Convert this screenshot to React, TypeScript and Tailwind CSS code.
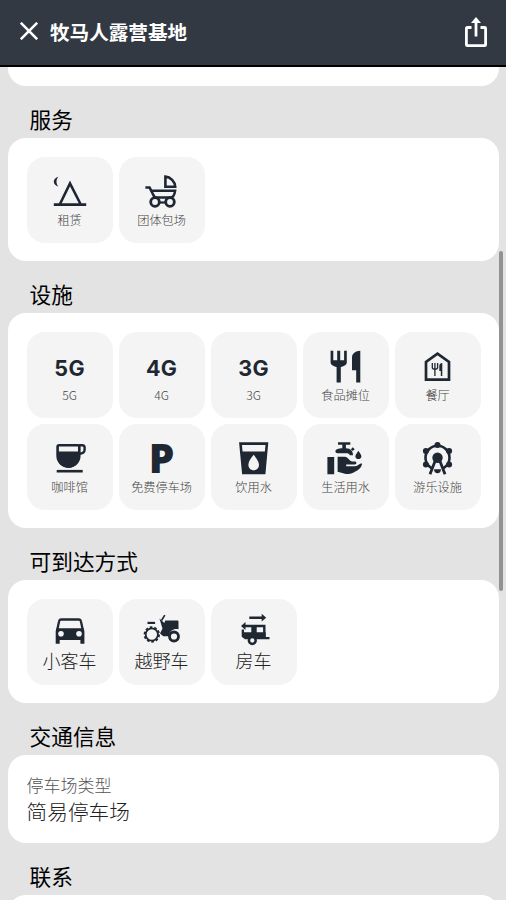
import type { ReactNode } from 'react';
import clsx from 'clsx';

/* ==========================================================
   icons (all drawn on a 36x36 grid)
   ========================================================== */
const Icon = ({ children }: { children: ReactNode }) => (
  <svg viewBox="0 0 36 36" className="h-9 w-9 overflow-visible" fill="none" stroke="currentColor" strokeWidth="2.6">
    {children}
  </svg>
);

const Letters = ({ text }: { text: string }) => (
  <span className="flex h-9 items-center justify-center pt-[7px] font-[Inter] text-[21.5px] leading-none font-bold tracking-[0.3px]">
    {text}
  </span>
);

const TentIcon = () => (
  <Icon>
    <path d="M6.4 3.8C.4 5.3.2 12 6.4 13.6 3.9 11 3.9 6.5 6.4 3.8Z" fill="currentColor" stroke="none" />
    <path d="M8 31 18 10.5 28.5 31" />
    <path d="M1.8 31.6h32.4" />
  </Icon>
);

const StrollerIcon = () => (
  <Icon>
    <path d="M1.4 14.6h4.2l2.6 5c1.2 2.4 1.6 5 4.6 5h13.4c2.6 0 4.4-3 4.9-6.8H7.4" strokeWidth="2.5" />
    <path d="M21.4 3.6v10.1h9.8C31 8.5 26.5 3.9 21.4 3.6Z" strokeWidth="2.6" />
    <path d="M13 29.5h10" strokeWidth="2.2" />
    <circle cx="11" cy="29" r="4.3" fill="#f4f4f4" strokeWidth="2.8" />
    <circle cx="26" cy="29" r="4.3" fill="#f4f4f4" strokeWidth="2.8" />
  </Icon>
);

const UtensilsIcon = () => (
  <Icon>
    <g fill="currentColor" stroke="none">
      <path d="M2.6 2.8h2.7v9.4h3.9V2.8h3v9.4h3.9V2.8h2.7v11.4c0 2.5-2.6 4-6 4.7v15.5H8.6V18.9c-3.4-.7-6-2.2-6-4.7Z" />
      <path d="M32.3 2.8v31.6h-4.1V22.2H24V9.6c0-4 3.3-6.7 8.3-6.8Z" />
    </g>
  </Icon>
);

const RestaurantIcon = () => (
  <Icon>
    <path d="M6 31.6V14L17.5 5.6 29 14v17.6Z" strokeWidth="2.7" />
    <path d="M12.3 15v4.5c0 1.2 1 1.8 2.6 1.8s2.7-.6 2.7-1.8V15M14.9 15v13" strokeWidth="1.3" />
    <path d="M22.3 15v13h-1.500v-5h-1.500v-5c0-1.800 1.200-3 3-3Z" fill="currentColor" stroke="none" />
  </Icon>
);

const CoffeeIcon = () => (
  <Icon>
    <path d="M5.6 6.7c0-1 .5-1.5 1.5-1.5h18.7c1 0 1.5.5 1.5 1.5v8.8c0 6.500-4.500 10.800-10.800 10.800S5.600 22 5.600 15.500Z" />
    <path d="M5 11.600h22.300v4.400c0 6.500-4.500 11.900-10.800 11.900S5 22.500 5 16Z" fill="currentColor" stroke="none" />
    <path d="M27 5.200h3.300c1.400 0 2.300 1 2.300 2.300v2.300c0 2.200-1.600 3.900-5.300 3.900" strokeWidth="2.400" />
    <path d="M4.700 31.200h26" />
  </Icon>
);

const ParkingIcon = () => (
  <span className="flex h-9 items-center justify-center font-['Open_Sans'] text-[40.5px] leading-9 font-extrabold">
    P
  </span>
);

const GlassIcon = () => (
  <Icon>
    <path d="M4.500 3.600h26.400l-2.700 29.300H7.300Z" />
    <path d="M4.700 11.500h26.100l-1.900 22.400H6.700Z" fill="currentColor" stroke="none" />
    <path d="M17.700 14.800c2.800 3.600 5.300 6.700 5.300 10 0 3.300-2.400 5.500-5.300 5.500s-5.300-2.200-5.300-5.500c0-3.300 2.500-6.400 5.300-10Z" fill="#f4f4f4" stroke="none" />
  </Icon>
);

const TapWaterIcon = () => (
  <Icon>
    <g fill="currentColor" stroke="none">
      <path d="M-.6 17h6.800v17.300H-.6ZM9.600 16.800h7.200c3.300 0 4.400 4.600 7.800 4.600h2.100c2.300 0 2.300 2.800 0 3h-8.500v1.800h8.900c3.200 0 4.100-3 7-2.700-.4 5-5.200 7.500-9.600 9.400-3.400 1.400-5.700 1.400-8.400.5l-6.500-1.600Z" />
      <path d="M10 2.300h12.300v2.500h-4.400v3.400c5.200.2 6.900 2.700 7.100 7h-3.200c-.4-1.500-1.600-2-4-2H9.600c-1.300 0-2.200-.9-2.200-2 0-1.900 3.300-2.900 6.900-3V4.800H10Z" />
      <path d="M30.400 10.700c1.600 2.500 3 4 3 5.700 0 1.500-1.300 2.600-3 2.600s-3-1.100-3-2.600c0-1.700 1.400-3.200 3-5.700Z" />
      <path d="M24.800 7.300 26.700 9.200 24.800 11.100 22.900 9.200Z" />
    </g>
  </Icon>
);

const FerrisWheelIcon = () => (
  <Icon>
    <circle cx="17.500" cy="17.700" r="12" strokeWidth="2.600" />
    <path d="M17.500 18 10 34.500h15Z" fill="#f4f4f4" stroke="none" />
    <path d="M15.500 20 10 34.300M19.500 20 25 34.300" strokeWidth="2.800" />
    <g fill="currentColor" stroke="none">
      <circle cx="17.500" cy="17.700" r="5.200" />
      <circle cx="17.500" cy="5" r="3" />
      <circle cx="5.900" cy="11" r="3" />
      <circle cx="29.100" cy="11" r="3" />
      <circle cx="5.900" cy="24.500" r="3" />
      <circle cx="29.100" cy="24.500" r="3" />
      <path d="M14 29.200h7c0 2.700-1.500 4.100-3.500 4.100S14 31.900 14 29.200Z" />
    </g>
  </Icon>
);

const CarIcon = () => (
  <Icon>
    <path d="M5.200 15 7.100 6.200c.2-1.100.8-1.700 1.800-1.700h18.200c1 0 1.600.6 1.800 1.700L30.800 15" strokeWidth="2.300" />
    <path d="M4.500 13.300h27l.9 2.700v12.700h-4v-3.600H7.700v3.600h-4V16Z" fill="currentColor" stroke="none" />
    <circle cx="9" cy="18.800" r="2.800" fill="#f4f4f4" stroke="none" />
    <circle cx="27" cy="18.800" r="2.800" fill="#f4f4f4" stroke="none" />
  </Icon>
);

const TractorIcon = () => (
  <Icon>
    <circle cx="7.800" cy="19.500" r="6.100" strokeWidth="1.800" />
    <circle cx="7.800" cy="19.500" r="7.200" strokeWidth="2" strokeDasharray="2.600 1.924" />
    <path d="M3.500 7.900h7.600" strokeWidth="2.200" />
    <path d="M20.800.2 17.500 5.500" strokeWidth="1.600" />
    <path d="M15.400 3.600 20.300 8l1-2.500h12c.8 0 1.200.5 1.200 1.200v7.500c-5-.8-9 1.500-9.700 7h-5.500L16 18.500l2.500-5Z" fill="currentColor" stroke="none" />
    <circle cx="30" cy="21.500" r="4.500" fill="#f4f4f4" strokeWidth="2.800" />
  </Icon>
);

const CamperIcon = () => (
  <Icon>
    <path d="M13.300 2.700h13.500M9 11h19.300v12" strokeWidth="2.400" />
    <path d="m25.700-1.200 4.500 3.900-4.500 3.900Zm-16.200 8.300L5 11l4.500 3.900Z" fill="currentColor" stroke="none" />
    <path d="M5.700 17.300h24v4.600h3.800v2.400H9l-3.300-2.500ZM15.300 10h5.400v9h-5.400ZM5.700 14.500h2.300v4H5.700Z" fill="currentColor" stroke="none" />
    <circle cx="16.300" cy="25.500" r="3.400" fill="#f4f4f4" strokeWidth="2.500" />
  </Icon>
);

/* ==========================================================
   sections
   ========================================================== */
interface Item {
  label: string;
  icon: ReactNode;
}

const services: Item[] = [
  { label: '租赁', icon: <TentIcon /> },
  { label: '团体包场', icon: <StrollerIcon /> },
];

const facilities: Item[] = [
  { label: '5G', icon: <Letters text="5G" /> },
  { label: '4G', icon: <Letters text="4G" /> },
  { label: '3G', icon: <Letters text="3G" /> },
  { label: '食品摊位', icon: <UtensilsIcon /> },
  { label: '餐厅', icon: <RestaurantIcon /> },
  { label: '咖啡馆', icon: <CoffeeIcon /> },
  { label: '免费停车场', icon: <ParkingIcon /> },
  { label: '饮用水', icon: <GlassIcon /> },
  { label: '生活用水', icon: <TapWaterIcon /> },
  { label: '游乐设施', icon: <FerrisWheelIcon /> },
];

const vehicles: Item[] = [
  { label: '小客车', icon: <CarIcon /> },
  { label: '越野车', icon: <TractorIcon /> },
  { label: '房车', icon: <CamperIcon /> },
];

const SectionTitle = ({ children }: { children: ReactNode }) => (
  <h2 className="flex h-[52.4px] items-end pb-[3.4px] pl-[21.5px] text-[21.7px] leading-8 text-black">{children}</h2>
);

const Tiles = ({ items, large }: { items: Item[]; large?: boolean }) => (
  <div className="grid grid-cols-[repeat(5,86px)] gap-[6px] rounded-[18px] bg-white py-[18.3px] pl-[18.6px]">
    {items.map(({ label, icon }) => (
      <div key={label} className="flex h-[86px] flex-col items-center rounded-[18px] bg-[#f4f4f4] pt-4 text-[#1f2732]">
        {icon}
        <span
          className={clsx(
            'leading-[18px] font-light whitespace-nowrap',
            large ? 'text-[18px] text-[#222]' : 'mt-0.5 text-[12.2px] text-[#444]',
          )}
        >
          {label}
        </span>
      </div>
    ))}
  </div>
);

export default function App() {
  return (
    <div className="relative flex h-[900px] w-[506px] flex-col overflow-hidden bg-[#e3e3e3] font-['Noto_Sans_CJK_SC',sans-serif]">
      <header className="flex h-[67px] shrink-0 items-center border-b-2 border-black bg-[#323942] pr-[18px] pl-5 text-white">
        <svg viewBox="0 0 18 18" className="mt-[-3px] h-[18px] w-[18px]" fill="none" stroke="currentColor" strokeWidth="2.6">
          <path d="m.8.8 16.4 16.4M17.2.8.8 17.2" />
        </svg>
        <h1 className="mt-[-2px] ml-3 text-[19.6px] leading-7 font-bold">牧马人露营基地</h1>
        <svg viewBox="0 0 24 32" className="mt-[-1px] ml-auto h-8 w-6" fill="none" stroke="currentColor" strokeWidth="2.8">
          <path d="M7.5 11.5H3.4c-.7 0-1 .4-1 1v16.2c0 .6.3 1 1 1h17.2c.7 0 1-.4 1-1V12.5c0-.6-.3-1-1-1h-4.1" />
          <path d="M12 20.5V4.5" />
          <path d="M12 1 17 7H7Z" fill="currentColor" stroke="none" />
        </svg>
      </header>

      <main className="flex flex-col pr-[7.5px] pl-2">
        <div className="h-[19px] rounded-b-[18px] bg-white" />

        <SectionTitle>服务</SectionTitle>
        <Tiles items={services} />

        <SectionTitle>设施</SectionTitle>
        <Tiles items={facilities} />

        <SectionTitle>可到达方式</SectionTitle>
        <Tiles items={vehicles} large />

        <SectionTitle>交通信息</SectionTitle>
        <div className="h-[87.5px] rounded-[18px] bg-white px-[18.5px] pt-[17.5px] font-light">
          <p className="text-[17px] leading-6 text-[#555]">停车场类型</p>
          <p className="text-[20.7px] leading-7 text-[#222]">简易停车场</p>
        </div>

        <SectionTitle>联系</SectionTitle>
        <div className="h-20 rounded-[18px] bg-white" />
      </main>

      {/* scroll thumb */}
      <div className="absolute top-[251px] right-[3px] h-[340px] w-1 rounded-full bg-[#929292]" />
    </div>
  );
}
